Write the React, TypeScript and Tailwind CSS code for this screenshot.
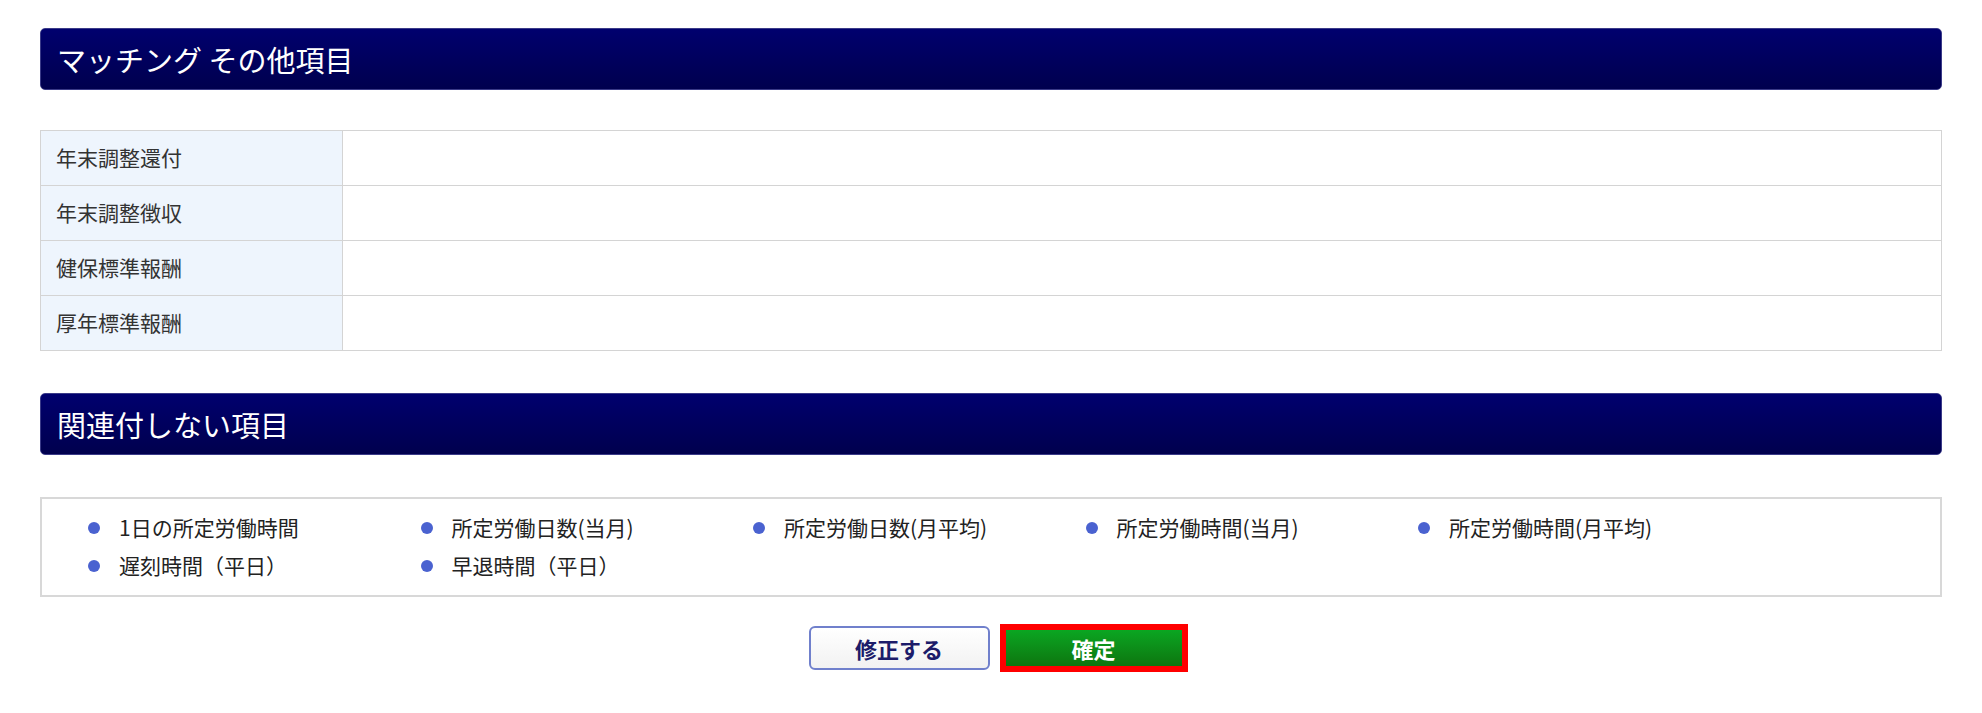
const otherRows = ["年末調整還付", "年末調整徴収", "健保標準報酬", "厚年標準報酬"];

const unlinked = [
  "1日の所定労働時間",
  "所定労働日数(当月)",
  "所定労働日数(月平均)",
  "所定労働時間(当月)",
  "所定労働時間(月平均)",
  "遅刻時間（平日）",
  "早退時間（平日）",
];

function SectionHeader({ title }: { title: string }) {
  return (
    <div className="flex h-[62px] items-center rounded-[5px] border border-[#3a3a88] bg-gradient-to-b from-[#00006e] to-[#00004e] px-[16px]">
      <h2 className="text-[29px] font-normal leading-none text-white">{title}</h2>
    </div>
  );
}

export default function App() {
  return (
    <div
      className="min-h-[713px] bg-white px-[40px] pt-[28px] text-[#333]"
      style={{ fontFamily: '"Noto Sans CJK JP", "Noto Sans", sans-serif' }}
    >
      <SectionHeader title="マッチング その他項目" />

      <table className="mt-[40px] w-full border-collapse border border-[#cccccc]">
        <tbody>
          {otherRows.map((label) => (
            <tr key={label} className="h-[55px]">
              <th className="w-[302px] border border-[#d4d4d4] bg-[#eef5fd] pl-[15px] text-left text-[21px] font-normal text-[#333]">
                {label}
              </th>
              <td className="border border-[#d4d4d4] bg-white" />
            </tr>
          ))}
        </tbody>
      </table>

      <div className="mt-[42px]">
        <SectionHeader title="関連付しない項目" />
      </div>

      <div className="mt-[42px] h-[100px] border-2 border-[#d8d8d8] pl-[46px] pt-[12px]">
        <ul className="grid grid-cols-[repeat(5,332.5px)] gap-y-[4px]">
          {unlinked.map((item) => (
            <li key={item} className="flex h-[34px] items-center gap-[19px] whitespace-nowrap text-[21px] text-[#222]">
              <span className="h-[12px] w-[12px] shrink-0 rounded-full bg-[#4a62d0]" />
              {item}
            </li>
          ))}
        </ul>
      </div>

      <div className="mt-[27px] flex items-center justify-center gap-[10px] pl-[14px]">
        <button className="h-[44px] w-[181px] rounded-[6px] border-2 border-[#7080cc] bg-gradient-to-b from-white to-[#f2f2f2] text-[22px] font-bold text-[#1c1c6a]">
          修正する
        </button>
        <button className="h-[48px] w-[188px] border-[6px] border-[#ff0000] bg-gradient-to-b from-[#0aa622] to-[#0d760f] text-[22px] font-bold text-white">
          確定
        </button>
      </div>
    </div>
  );
}
